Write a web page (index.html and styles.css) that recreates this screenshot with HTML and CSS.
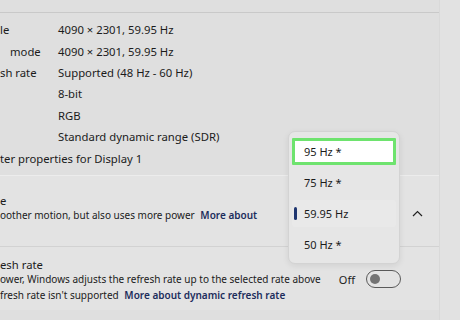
FILE: index.html
```html
<!DOCTYPE html>
<html lang="en">
<head>
  <meta charset="UTF-8" />
  <title>Advanced display</title>
  <link rel="stylesheet" href="styles.css">
</head>
<body>

  <div class="page">
    <div class="main">
      <div class="topbar"></div>

      <div class="info">
        <div class="label">le</div>
        <div class="value">4090 × 2301, 59.95 Hz</div>
        <div class="label indent">mode</div>
        <div class="value">4090 × 2301, 59.95 Hz</div>
        <div class="label">sh rate</div>
        <div class="value">Supported (48 Hz - 60 Hz)</div>
        <div class="label"></div>
        <div class="value">8-bit</div>
        <div class="label"></div>
        <div class="value">RGB</div>
        <div class="label"></div>
        <div class="value">Standard dynamic range (SDR)</div>
        <div class="label wide">ter properties for Display 1</div>
      </div>

      <div class="card card-rate">
        <div class="card-text">
          <div class="title">e</div>
          <div class="desc">oother motion, but also uses more power <a class="link" href="#">More about</a></div>
        </div>
        <span class="chevron">
          <svg width="11" height="7" viewBox="0 0 11 7"><path d="M1 6 L5.5 1.5 L10 6" fill="none" stroke="#222" stroke-width="1.2"/></svg>
        </span>
      </div>

      <div class="card card-dynamic">
        <div class="card-text">
          <div class="title">esh rate</div>
          <div class="desc">ower, Windows adjusts the refresh rate up to the selected rate above</div>
          <div class="desc">fresh rate isn't supported <a class="link" href="#">More about dynamic refresh rate</a></div>
        </div>
        <div class="switch-wrap">
          <span class="switch-label">Off</span>
          <span class="switch"><span class="knob"></span></span>
        </div>
      </div>
    </div>
    <div class="gutter"></div>
  </div>

  <ul class="dropdown">
    <li class="option focused">95 Hz *</li>
    <li class="option">75 Hz *</li>
    <li class="option selected">59.95 Hz</li>
    <li class="option">50 Hz *</li>
  </ul>

</body>
</html>
```

FILE: styles.css
```css
* {
  margin: 0;
  padding: 0;
  box-sizing: border-box;
}

body {
  font-family: 'Noto Sans', 'Open Sans', sans-serif;
  background: #dfdfdf;
  color: #1b1b1b;
  width: 460px;
  height: 320px;
  overflow: hidden;
  position: relative;
}

.page {
  display: flex;
  height: 320px;
}

.main {
  width: 439px;
}

.gutter {
  flex: 1;
  background: #e2e2e2;
  border-left: 1px solid #d9d9d9;
}

.topbar {
  height: 13px;
  border-bottom: 1px solid #c9c9c9;
}

.info {
  display: grid;
  grid-template-columns: 58px 1fr;
  grid-auto-rows: 21.4px;
  align-items: center;
  font-size: 11.3px;
  padding-top: 6px;
  height: 162px;
}

.label.indent {
  padding-left: 10px;
}

.label.wide {
  grid-column: 1 / 3;
}

.card {
  display: flex;
  background: #e3e3e3;
  border-top: 1px solid #ececec;
}

.card-rate {
  height: 72px;
  padding: 17px 16px 0 0;
  border-bottom: 1px solid #d2d2d2;
  align-items: flex-start;
}

.card-dynamic {
  height: 63px;
  padding: 10px 38px 0 0;
  align-items: flex-start;
  border-top: none;
}

.card-text {
  flex: 1;
}

.title {
  font-size: 11.3px;
  line-height: 15px;
}

.desc {
  font-size: 10px;
  line-height: 15px;
  white-space: nowrap;
}

.card-dynamic .desc + .desc {
  margin-top: 1px;
}

.link {
  color: #1c2d5c;
  font-weight: 600;
  text-decoration: none;
  margin-left: 3px;
}

.chevron {
  margin-top: 17px;
  display: flex;
}

.switch-wrap {
  display: flex;
  align-items: center;
  gap: 11px;
  margin-top: 13px;
}

.switch-label {
  font-size: 11px;
}

.switch {
  width: 35px;
  height: 18px;
  border: 1px solid #5a5a5a;
  border-radius: 9px;
  display: flex;
  align-items: center;
  padding-left: 3px;
}

.knob {
  width: 10px;
  height: 10px;
  border-radius: 50%;
  background: #737373;
}

.dropdown {
  position: absolute;
  left: 288px;
  top: 131px;
  width: 112px;
  height: 133px;
  list-style: none;
  background: #e6e6e6;
  border: 1px solid #d3d3d3;
  border-radius: 7px;
  box-shadow: 0 2px 6px rgba(0, 0, 0, 0.08);
  padding: 6px 3px 0 3px;
  display: flex;
  flex-direction: column;
  gap: 4px;
}

.option {
  height: 27px;
  font-size: 11px;
  display: flex;
  align-items: center;
  padding-left: 12px;
  border-radius: 3px;
  position: relative;
}

.option.focused {
  background: #fff;
  border: 3px solid #6ee36e;
  border-radius: 1px;
  padding-left: 9px;
}

.option.selected {
  background: #e9e9e9;
}

.option.selected::before {
  content: "";
  position: absolute;
  left: 2px;
  top: 7px;
  width: 3px;
  height: 13px;
  border-radius: 2px;
  background: #1f3670;
}
```
